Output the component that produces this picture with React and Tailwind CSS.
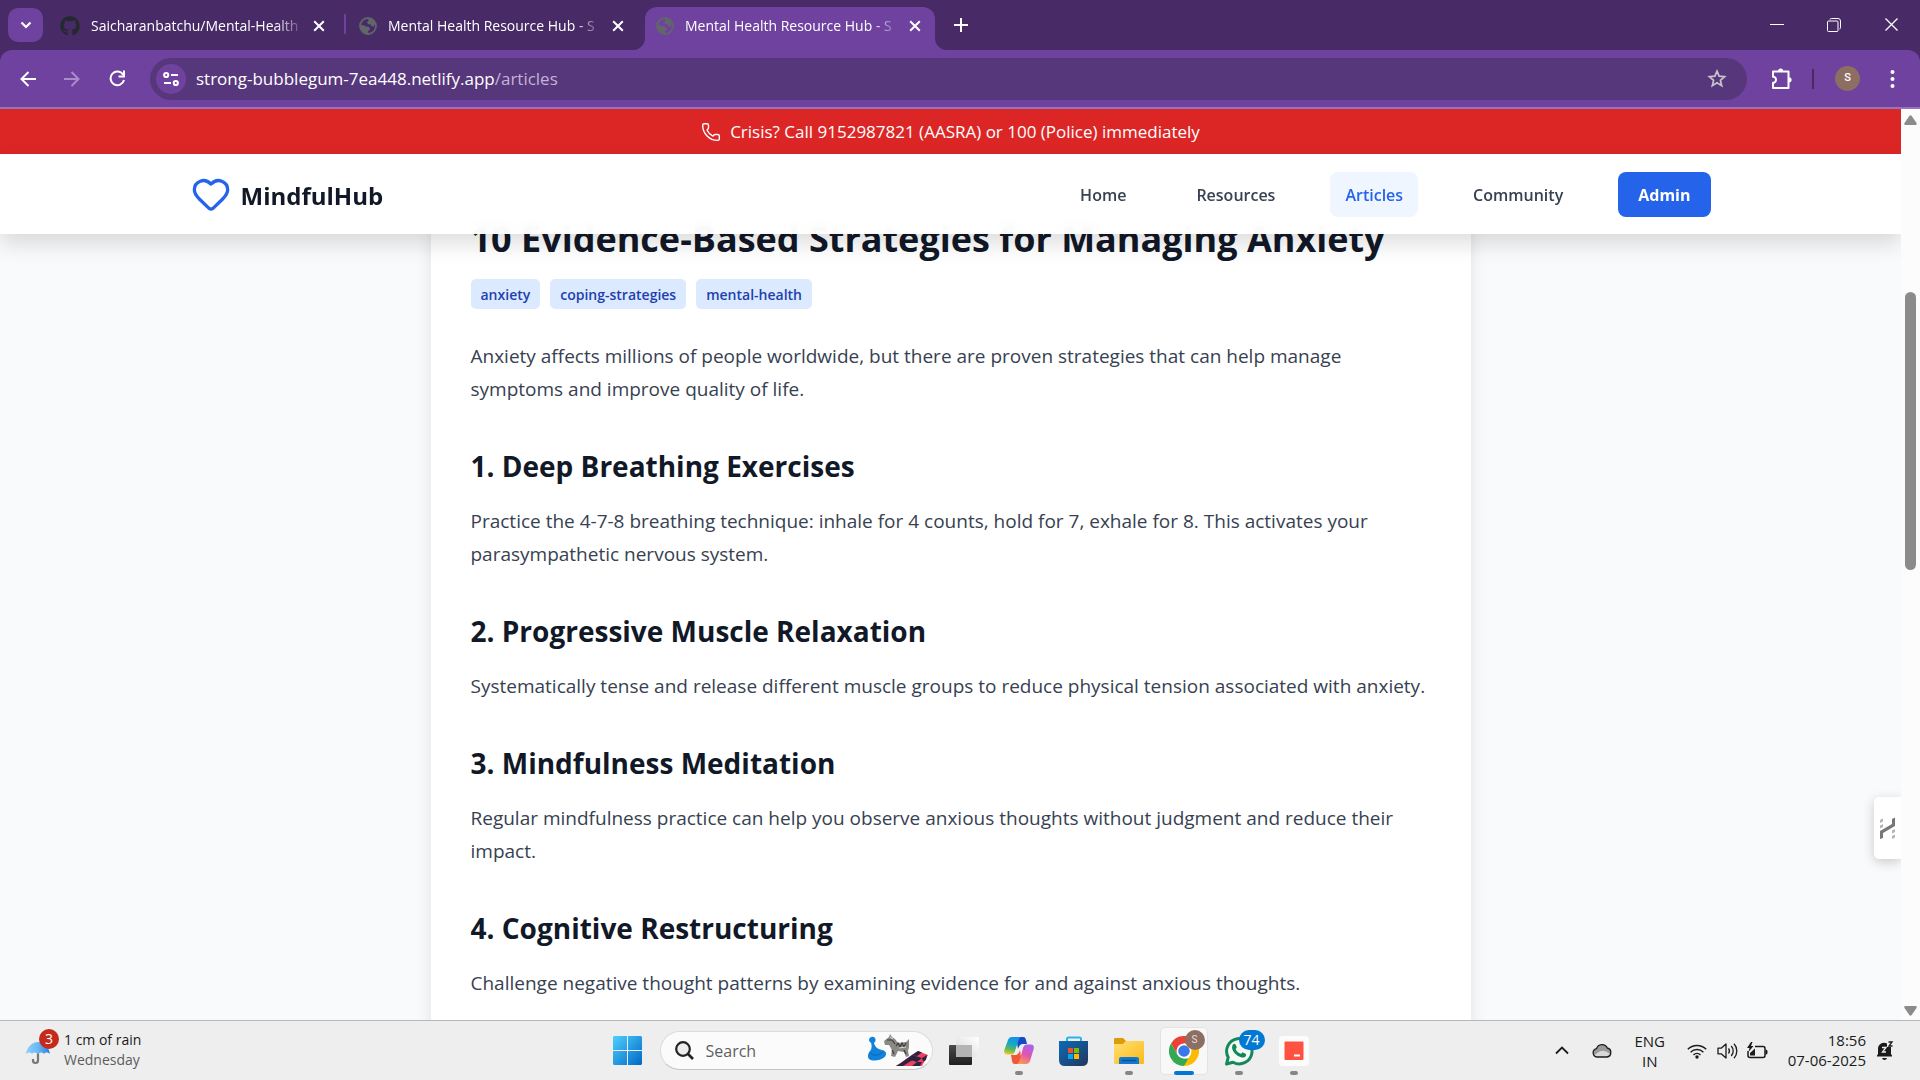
import React from 'react';
import { Phone, Heart } from 'lucide-react';
import { FaGithub } from 'react-icons/fa';

const sections = [
  {
    title: '1. Deep Breathing Exercises',
    text: 'Practice the 4-7-8 breathing technique: inhale for 4 counts, hold for 7, exhale for 8. This activates your parasympathetic nervous system.',
  },
  {
    title: '2. Progressive Muscle Relaxation',
    text: 'Systematically tense and release different muscle groups to reduce physical tension associated with anxiety.',
  },
  {
    title: '3. Mindfulness Meditation',
    text: 'Regular mindfulness practice can help you observe anxious thoughts without judgment and reduce their impact.',
  },
  {
    title: '4. Cognitive Restructuring',
    text: 'Challenge negative thought patterns by examining evidence for and against anxious thoughts.',
  },
];

function Cross({ size = 12, width = 2 }) {
  return (
    <svg width={size} height={size} viewBox="0 0 12 12" fill="none" stroke="currentColor" strokeWidth={width}>
      <path d="M1.2 1.2l9.6 9.6M10.8 1.2l-9.6 9.6" />
    </svg>
  );
}

function Globe() {
  return (
    <svg width="18" height="18" viewBox="0 0 18 18" className="shrink-0">
      <circle cx="9" cy="9" r="8" fill="none" stroke="#62666a" strokeWidth="1.8" />
      <path
        fill="#62666a"
        d="M9 1c3 0 6 2 7.300 4.500L15 9.500l-2.500-.3-1-2H9.200L8 5.500 9.500 3.500zM1.200 8L4.500 8.200 7 9.500l3 .5 1.200 2.500-2 1.500v2.500C5 17 1.500 13.500 1.200 8z"
      />
    </svg>
  );
}

function Tab({ icon, title, active }) {
  return (
    <div
      className={
        active
          ? 'relative flex h-[43px] w-[290px] items-center rounded-t-xl bg-[#6f42a0] pb-1.5 pl-[11px] pr-[14px]'
          : 'relative flex h-[43px] w-[299px] items-center pb-1.5 pl-[13px] pr-[21px]'
      }
    >
      {active && (
        <>
          <svg className="absolute -left-3 bottom-0" width="12" height="12" viewBox="0 0 12 12">
            <path d="M12 0v12H0A12 12 0 0 0 12 0z" fill="#6f42a0" />
          </svg>
          <svg className="absolute -right-3 bottom-0" width="12" height="12" viewBox="0 0 12 12">
            <path d="M0 0v12h12A12 12 0 0 1 0 0z" fill="#6f42a0" />
          </svg>
        </>
      )}
      {icon}
      <span className="ml-[11px] mr-2 min-w-0 flex-1 overflow-hidden whitespace-nowrap text-[14px] text-white [mask-image:linear-gradient(to_right,black_86%,transparent)]">
        {title}
      </span>
      <button aria-label="Close tab" className="text-white">
        <Cross />
      </button>
    </div>
  );
}

function TabStrip() {
  return (
    <div className="flex h-[50px] shrink-0 items-end bg-[#472a66]">
      <button aria-label="Search tabs" className="mb-2 ml-2 mr-1 flex h-[34px] w-[35px] items-center justify-center rounded-[10px] bg-[#6f42a0] text-white">
        <svg width="12" height="8" viewBox="0 0 12 8" fill="none" stroke="currentColor" strokeWidth="2.200">
          <path d="M1.500 1.500L6 6l4.500-4.500" />
        </svg>
      </button>
      <Tab icon={<FaGithub size={20} color="#24292e" className="shrink-0" />} title="Saicharanbatchu/Mental-Health" />
      <div className="mb-4 -ml-[2px] h-5 w-[2px] rounded bg-[#6f42a0]" />
      <Tab icon={<Globe />} title="Mental Health Resource Hub - S" />
      <Tab icon={<Globe />} title="Mental Health Resource Hub - S" active />
      <button aria-label="New tab" className="mb-[18px] ml-[19px] text-white">
        <svg width="14" height="14" viewBox="0 0 14 14" stroke="currentColor" strokeWidth="2">
          <path d="M7 0v14M0 7h14" />
        </svg>
      </button>
      <div className="mb-[18px] ml-auto mr-[21px] flex items-center gap-[43px] text-white">
        <button aria-label="Minimize">
          <svg width="14" height="14" viewBox="0 0 14 14" stroke="currentColor">
            <path d="M0 6.500h14" />
          </svg>
        </button>
        <button aria-label="Restore">
          <svg width="14" height="14" viewBox="0 0 14 14" fill="none" stroke="currentColor">
            <rect x=".5" y="3" width="10.500" height="10.500" rx="1" />
            <path d="M3 1.500Q3 .5 4.500 .5H11q2.500 0 2.500 2.500v6.500q0 1.500-1 1.500" />
          </svg>
        </button>
        <button aria-label="Close window">
          <Cross size={15} width={1} />
        </button>
      </div>
    </div>
  );
}

function Toolbar() {
  return (
    <div className="shrink-0 bg-[#472a66]">
      <div className="flex h-[59px] items-center rounded-t-xl border-b-2 border-[#9474bd] bg-[#6f42a0] pl-5 text-white">
        <button aria-label="Back">
          <svg width="16" height="16" viewBox="0 0 16 16" fill="none" stroke="currentColor" strokeWidth="2">
            <path d="M16 8H2M8.500 1L1.500 8l7 7" />
          </svg>
        </button>
        <button aria-label="Forward" className="ml-7 text-[#a98dc8]">
          <svg width="16" height="16" viewBox="0 0 16 16" fill="none" stroke="currentColor" strokeWidth="2">
            <path d="M0 8h14M7.500 1l7 7-7 7" />
          </svg>
        </button>
        <button aria-label="Reload" className="ml-[29px]">
          <svg width="17" height="17" viewBox="0 0 17 17" fill="none" stroke="currentColor" strokeWidth="2">
            <path d="M15 10a6.800 6.800 0 1 1-.8-5.200" />
            <path d="M15 .5v6H9.500" />
          </svg>
        </button>
        <div className="ml-6 flex h-[42px] min-w-0 flex-1 items-center rounded-full bg-[#57377b] pl-1.5 pr-5">
          <button aria-label="Site information" className="flex h-[30px] w-[30px] shrink-0 items-center justify-center rounded-full bg-[#6f42a0]">
            <svg width="16" height="16" viewBox="0 0 16 16" fill="none" stroke="currentColor" strokeWidth="2">
              <circle cx="3.200" cy="4" r="2.100" />
              <path d="M8 4h7M1 12h7" />
              <circle cx="12.800" cy="12" r="2.100" />
            </svg>
          </button>
          <a href="#address" className="ml-[10px] flex-1 whitespace-nowrap text-[17px]">
            strong-bubblegum-7ea448.netlify.app<span className="text-[#c3b3d6]">/articles</span>
          </a>
          <button aria-label="Bookmark this page" className="text-[#c8c4cc]">
            <svg width="20" height="19" viewBox="0 0 20 19" fill="none" stroke="currentColor" strokeWidth="1.700">
              <path d="M10 2.200l2.100 5 5.500.5-4.200 3.600 1.300 5.400L10 13.800l-4.700 2.900 1.300-5.400L2.400 7.700l5.500-.5z" />
            </svg>
          </button>
        </div>
        <button aria-label="Extensions" className="ml-6">
          <svg width="22" height="22" viewBox="0 0 22 22" fill="none" stroke="currentColor" strokeWidth="2">
            <path d="M2 3.500h15.500V20H2v-5.200c4 .2 4-6.200 0-6z" strokeLinejoin="round" />
            <path d="M7 3.200a2.600 2.600 0 0 1 5.200 0zM18 9.200a2.600 2.600 0 0 1 0 5.200z" fill="currentColor" stroke="none" />
          </svg>
        </button>
        <div className="ml-[19px] h-5 w-[2px] bg-[#472a66]" />
        <button aria-label="Profile" className="ml-[21px] flex h-[25px] w-[25px] items-center justify-center rounded-full bg-[#8d6e63] font-[Roboto] text-[11px] font-medium">
          S
        </button>
        <button aria-label="Browser menu" className="ml-[30px] mr-[25px]">
          <svg width="5" height="18" viewBox="0 0 5 18" fill="currentColor">
            <circle cx="2.500" cy="2" r="2" />
            <circle cx="2.500" cy="9" r="2" />
            <circle cx="2.500" cy="16" r="2" />
          </svg>
        </button>
      </div>
    </div>
  );
}

function NavLink({ children, active }) {
  return (
    <a
      href="#nav"
      className={
        active
          ? 'flex h-[45px] items-center rounded-lg bg-[#eff6ff] px-[15px] pt-[2px] text-[#2563eb]'
          : 'flex h-[45px] items-center rounded-lg px-[15px] pt-[2px] text-[#374151]'
      }
    >
      {children}
    </a>
  );
}

function Header() {
  return (
    <header className="relative z-10">
      <div className="flex h-[45px] items-center justify-center gap-[9px] bg-[#dc2626] pt-px text-[17px] text-white">
        <Phone size={20} strokeWidth={1.7} />
        <p>Crisis? Call 9152987821 (AASRA) or 100 (Police) immediately</p>
      </div>
      <div className="h-20 bg-white/95 shadow-[0_10px_20px_rgba(0,0,0,0.13)] backdrop-blur-sm">
        <div className="mx-auto flex h-full max-w-[1600px] items-center justify-between px-10">
          <a href="#home" className="flex items-center gap-[10px]">
            <Heart size={40} color="#2563eb" strokeWidth={2} />
            <span className="pt-[3px] text-[24px] font-bold text-[#111827]">MindfulHub</span>
          </a>
          <nav className="flex items-center gap-10 text-[16px] font-semibold">
            <NavLink>Home</NavLink>
            <NavLink>Resources</NavLink>
            <NavLink active>Articles</NavLink>
            <NavLink>Community</NavLink>
            <button className="h-[45px] rounded-lg bg-[#2563eb] px-5 pt-[2px] font-bold text-white">Admin</button>
          </nav>
        </div>
      </div>
    </header>
  );
}

function Article() {
  return (
    <article className="mx-auto -mt-20 max-w-[1040px] bg-white px-10 pb-10 pt-[61px] shadow-[0_4px_16px_rgba(0,0,0,0.1)]">
      <h1 className="whitespace-nowrap text-[36px] font-bold leading-[48px] text-[#111827]">
        10 Evidence-Based Strategies for Managing Anxiety
      </h1>
      <div className="mb-[31px] mt-4 flex gap-[10px]">
        {['anxiety', 'coping-strategies', 'mental-health'].map((tag) => (
          <span key={tag} className="flex h-[30px] items-center rounded-[5px] bg-[#dbeafe] px-[10px] text-[14px] font-semibold text-[#1e40af]">
            {tag}
          </span>
        ))}
      </div>
      <p className="text-[19px] leading-[33px] text-[#374151]">
        Anxiety affects millions of people worldwide, but there are proven strategies that can help manage symptoms and improve quality of life.
      </p>
      {sections.map((s) => (
        <section key={s.title}>
          <h2 className="mb-[19px] mt-10 text-[28px] font-bold leading-[40px] text-[#111827]">{s.title}</h2>
          <p className="text-[19px] leading-[33px] text-[#374151]">{s.text}</p>
        </section>
      ))}
    </article>
  );
}

function Scrollbar() {
  return (
    <div className="flex w-[19px] shrink-0 flex-col items-center bg-[#fcfcfc] pb-1 pt-[6px]">
      <svg width="13" height="10" viewBox="0 0 13 10" fill="#8b8b8b">
        <path d="M5.300 1a1.500 1.500 0 0 1 2.400 0L12.500 8q.8 2-1 2h-10q-1.800 0-1-2z" />
      </svg>
      <div className="grow-[38]" />
      <div className="w-[11px] grow-[63] rounded-full bg-[#8b8b8b]" />
      <div className="grow-[99]" />
      <svg width="13" height="10" viewBox="0 0 13 10" fill="#8b8b8b">
        <path d="M5.300 9a1.500 1.500 0 0 0 2.400 0L12.500 2q.8-2-1-2h-10q-1.800 0-1 2z" />
      </svg>
    </div>
  );
}

function Weather() {
  return (
    <button className="flex items-center pl-[26px] text-left">
      <span className="relative">
        <svg width="26" height="30" viewBox="0 0 26 30">
          <defs>
            <linearGradient id="umb" x1="0" y1="0" x2="1" y2="0">
              <stop offset="0" stopColor="#8fd0f8" />
              <stop offset=".5" stopColor="#6ab8f7" />
              <stop offset="1" stopColor="#2b7fe0" />
            </linearGradient>
          </defs>
          <path d="M12 13v11.500a2.500 2.500 0 0 1-5 0V23" fill="none" stroke="#777" strokeWidth="2.200" />
          <path d="M0 18C1 10 7 6 12 6s11 4 12 12c-2-2-5-2-6 0-1.500-2-4-2-6 0-2-2-4.500-2-6 0-1.500-2-4-2-6 0z" fill="url(#umb)" />
        </svg>
        <span className="absolute -top-[7px] left-[13px] flex h-5 w-5 items-center justify-center rounded-full bg-[#c42b1c] text-[14px] text-white">3</span>
      </span>
      <span className="ml-3 pb-[2px] text-[14px] leading-5">
        <span className="block text-[#1b1b1b]">1 cm of rain</span>
        <span className="block text-[#5c5c5c]">Wednesday</span>
      </span>
    </button>
  );
}

function TaskbarButton({ label, children, running, active }) {
  return (
    <button
      aria-label={label}
      className={
        active
          ? 'relative flex h-12 w-12 items-center justify-center rounded-[5px] border border-[#e3e3e3] bg-[#f8f8f8]'
          : 'relative flex h-12 w-12 items-center justify-center'
      }
    >
      {children}
      {running && !active && <span className="absolute bottom-0 left-5 h-1 w-2 rounded-full bg-[#868686]" />}
      {active && <span className="absolute -bottom-px left-[13px] h-1 w-5 rounded-full bg-[#0078d4]" />}
    </button>
  );
}

function TaskbarApps() {
  return (
    <div className="flex items-center pl-[10px]">
      <button aria-label="Start" className="mr-[18px]">
        <svg width="29" height="29" viewBox="0 0 29 29">
          <defs>
            <linearGradient id="win" x1="0" y1="0" x2="1" y2="1">
              <stop offset="0" stopColor="#4fd0fc" />
              <stop offset="1" stopColor="#0067c8" />
            </linearGradient>
          </defs>
          <path d="M1 0h13v14H0V1zM15 0h13l1 1v13H15zM0 15h14v14H1l-1-1zM15 15h14v13l-1 1H15z" fill="url(#win)" />
        </svg>
      </button>
      <label className="mr-[7px] flex h-[39px] w-[273px] items-center rounded-full border border-[#dcdcdc] border-b-[#c4c4c4] bg-[#fbfbfb] pl-[14px] pr-1">
        <svg width="19" height="19" viewBox="0 0 19 19" fill="none" stroke="#222" strokeWidth="2.200">
          <circle cx="8" cy="8" r="6.800" fill="#ededed" />
          <path d="M13 13l5 5" strokeWidth="2.600" />
        </svg>
        <input aria-label="Search" placeholder="Search" className="ml-3 w-0 min-w-0 flex-1 bg-transparent text-[16px] placeholder-[#5f5f5f] outline-none" />
        <svg width="60" height="34" viewBox="0 0 60 34">
          <path d="M1 6a3.300 3.300 0 1 1 5 2.800C7 13 9 15 14 16c5 1 5 5 2 7.500-4 3.500-12 4-15 1.500-2-2-1-6 1.500-8.500C4 14 3.800 11 3 8.800 1.800 8.300 1 7 1 6z" fill="#1182dc" />
          <path d="M2 19c3 3 9 3 13-1" fill="none" stroke="#0a63b4" />
          <path d="M16 7l5-4 1-3 2 3 3 2 3 4 8-1 3-3 0 8-1 4 1 5-3 1-2-5-6-1-3 6-4-1 1-6-3-5-4 0z" fill="#8a8983" />
          <path d="M19 6l5 0 3 4M28 12l2-3 2 4 2-4 2 4 2-4M24 16l2 4M36 16l2 4" fill="none" stroke="#3f3e3a" strokeWidth="1.200" />
          <path d="M22 3l3 2M31 14l7-1" stroke="#dcdbd5" />
          <path d="M28 32L50 17l10 4-6 11z" fill="#f0415d" />
          <path d="M50 17l4 1.500-5 3.500-5-1zM39 24.500l5-3.500 5 1.500-5 4zM54 24l5-3-1 5-3 1.500zM33 29l6-4.500 5 2-6 3.500zM44 26.500l5-4 5 1.500-5 4zM28 32l5-3 5 1-3 2zM44 32l5-4 5 0-2 4z" fill="#2a2440" />
        </svg>
      </label>
      <div className="flex gap-[7px]">
        <TaskbarButton label="Task view">
          <svg width="30" height="30" viewBox="0 0 30 30">
            <defs>
              <linearGradient id="tvb" x1="0" y1="0" x2="0" y2="1">
                <stop offset="0" stopColor="#4a4a4a" />
                <stop offset="1" stopColor="#1f1f1f" />
              </linearGradient>
              <linearGradient id="tvw" x1="1" y1="0" x2="0" y2="1">
                <stop offset="0" stopColor="#fff" />
                <stop offset="1" stopColor="#d8d8d8" />
              </linearGradient>
            </defs>
            <rect x="0" y="9" width="23" height="20" rx="1" fill="url(#tvb)" />
            <rect x="7" y="1" width="23" height="20" rx="1" fill="url(#tvw)" />
            <rect x="7" y="9" width="16" height="12" fill="#b4b4b4" />
          </svg>
        </TaskbarButton>
        <TaskbarButton label="Copilot" running>
          <svg width="30" height="30" viewBox="0 0 30 30">
            <defs>
              <linearGradient id="cp1" x1=".5" y1="0" x2=".3" y2="1">
                <stop offset="0" stopColor="#1590e8" />
                <stop offset=".4" stopColor="#16a9c4" />
                <stop offset=".7" stopColor="#58b95b" />
                <stop offset="1" stopColor="#f2c81e" />
              </linearGradient>
              <linearGradient id="cp2" x1=".7" y1="0" x2=".3" y2="1">
                <stop offset="0" stopColor="#a665ee" />
                <stop offset=".5" stopColor="#e055b0" />
                <stop offset="1" stopColor="#f99a50" />
              </linearGradient>
            </defs>
            <path d="M12 1h7c2 0 2.500 1 3 3l1 4h-4c-3 0-4 2-5 5z" fill="#1848c8" />
            <path d="M8 1h9c-2 1-2.500 3-3 5l-3 9c-1 3-2 3.500-4 3.500H3c-2.500 0-3.500-2-2.500-5L4 4c.6-2 2-3 4-3z" fill="url(#cp1)" />
            <path d="M18 28h-7c-2 0-2.500-1-3-3l-1-6h4c3 0 4-2 5-5z" fill="#f0583c" />
            <path d="M22 28h-9c2-1 2.500-3 3-5l3-11c1-3 2-3.500 4-3.500h4c2.500 0 3.500 2 2.500 5L26 25c-.6 2-2 3-4 3z" fill="url(#cp2)" />
          </svg>
        </TaskbarButton>
        <TaskbarButton label="Microsoft Store">
          <svg width="30" height="30" viewBox="0 0 30 30">
            <defs>
              <linearGradient id="st" x1="0" y1="0" x2="1" y2="1">
                <stop offset="0" stopColor="#0c6cb8" />
                <stop offset="1" stopColor="#24355e" />
              </linearGradient>
            </defs>
            <path d="M8 6V3q0-1.500 1.500-1.500h11Q22 1.500 22 3v3" fill="none" stroke="#27b5ee" strokeWidth="2" />
            <path d="M0 5h29v19q0 6-6 6H6q-6 0-6-6z" fill="url(#st)" />
            <path fill="#f25022" d="M9 12h5v5H9z" />
            <path fill="#7fba00" d="M15 12h5v5h-5z" />
            <path fill="#00a4ef" d="M9 18h5v5H9z" />
            <path fill="#ffb900" d="M15 18h5v5h-5z" />
          </svg>
        </TaskbarButton>
        <TaskbarButton label="File Explorer" running>
          <svg width="30" height="30" viewBox="0 0 30 30">
            <defs>
              <linearGradient id="fe" x1="0" y1="0" x2="1" y2="1">
                <stop offset="0" stopColor="#ffdf72" />
                <stop offset="1" stopColor="#fcba18" />
              </linearGradient>
            </defs>
            <path d="M0 3q0-1 1-1h8l4 4h-2L9 9H0z" fill="#dc9c0a" />
            <path d="M0 8h9l3-3h17q1 0 1 1v21q0 1-1 1H1q-1 0-1-1z" fill="url(#fe)" />
            <path d="M5 28v-5q0-2 2-2h16q2 0 2 2v5z" fill="#1478cc" />
            <path d="M8 24.500h14" stroke="#0b5394" strokeWidth="1.500" />
          </svg>
        </TaskbarButton>
        <TaskbarButton label="Google Chrome" active>
          <svg width="30" height="30" viewBox="0 0 48 48">
            <path d="M3.200 12A24 24 0 0 1 44.800 12H24L13.600 30z" fill="#ea4335" />
            <path d="M3.200 12L13.600 30 24 36H34.400L24 48A24 24 0 0 1 3.200 12z" fill="#34a853" />
            <path d="M24 48L34.400 30V12h10.400A24 24 0 0 1 24 48zM24 12h12v18z" fill="#fbbc04" />
            <circle cx="24" cy="24" r="12" fill="#fff" />
            <circle cx="24" cy="24" r="9.300" fill="#3b78e7" />
          </svg>
          <span className="absolute right-[2px] top-[2px] flex h-5 w-5 items-center justify-center rounded-full bg-[#8d6e63] font-[Roboto] text-[10px] text-[#e6dcd8]">S</span>
        </TaskbarButton>
        <TaskbarButton label="WhatsApp" running>
          <svg width="30" height="30" viewBox="0 0 30 30">
            <path d="M2.500 28l1.700-6.700A12.700 12.700 0 1 1 9 26.200z" fill="#f4fbf7" stroke="#15885a" strokeWidth="3" strokeLinejoin="round" />
            <path d="M9 8.500c1-1.200 2.200-1 2.700.2l1 2.300c.4.800-1 1.700-1 2.300 1.200 2.500 3 3.800 5 4.500.8.200 1.400-1.700 2.200-1.400l2.700 1.300c1 .6.600 2.500-.6 3.300-2.500 1.500-6.500 0-9.500-3-3-2.800-4.500-7-2.500-9.500z" fill="#15885a" />
          </svg>
          <span className="absolute -right-[2px] top-[3px] flex h-5 w-[26px] items-center justify-center rounded-full bg-[#0078d4] text-[14px] text-white">74</span>
        </TaskbarButton>
        <TaskbarButton label="Screen recorder" running>
          <svg width="30" height="30" viewBox="0 0 30 30">
            <rect width="30" height="30" rx="4" fill="#fcfcfc" />
            <rect x="5.500" y="5.500" width="19" height="18.500" rx="1" fill="#ff5240" />
            <path d="M15 19.500h6" stroke="#fff" strokeWidth="2" />
          </svg>
        </TaskbarButton>
      </div>
    </div>
  );
}

function Tray() {
  return (
    <div className="flex items-center justify-end pr-[26px] text-[15px] leading-5 text-[#1b1b1b]">
      <button aria-label="Show hidden icons">
        <svg width="14" height="9" viewBox="0 0 14 9" fill="none" stroke="#1b1b1b" strokeWidth="1.800">
          <path d="M1 7.500l6-6 6 6" />
        </svg>
      </button>
      <svg className="ml-[23px]" width="20" height="15" viewBox="0 0 20 15">
        <path d="M5 14a4.200 4.200 0 0 1-.5-8.300A5.800 5.800 0 0 1 15.300 5 4.600 4.600 0 0 1 15 14z" fill="#9a9a9a" />
        <path d="M2 12c3-1 6-5 10-4 3 .5 5 2 6.500 4-1 1.500-2 2-3.500 2H5q-2 0-3-2z" fill="#d9d9d9" />
        <path d="M5 14a4.200 4.200 0 0 1-.5-8.300A5.800 5.800 0 0 1 15.300 5 4.600 4.600 0 0 1 15 14z" fill="none" stroke="#1b1b1b" strokeWidth="1.300" />
      </svg>
      <button className="ml-[22px] w-8 text-center">
        ENG
        <br />
        IN
      </button>
      <svg className="ml-[21px]" width="20" height="16" viewBox="0 0 20 16" fill="none" stroke="#1b1b1b" strokeWidth="1.400">
        <path d="M.8 6.300a13 13 0 0 1 18.400 0M3.600 9.200a9 9 0 0 1 12.800 0M6.500 12a5 5 0 0 1 7 0" />
        <circle cx="10" cy="14" r="1.700" fill="#1b1b1b" stroke="none" />
      </svg>
      <svg className="ml-[10px]" width="21" height="18" viewBox="0 0 21 18" fill="none" stroke="#1b1b1b" strokeWidth="1.300">
        <path d="M1 6.200h3.200L9 2v14l-4.800-4.200H1z" strokeLinejoin="round" />
        <path d="M11.500 6.500a4 4 0 0 1 0 5M14.200 4a7.300 7.300 0 0 1 0 10M17 1.800a10.600 10.600 0 0 1 0 14.400" />
      </svg>
      <svg className="ml-[9px]" width="21" height="18" viewBox="0 0 21 18">
        <path d="M8 4.500h8q2 0 2 2v7q0 2-2 2H3q-2 0-2-2V9" fill="none" stroke="#1b1b1b" strokeWidth="1.500" />
        <path d="M3 13.500V11l5-4.500v7z" fill="#1b1b1b" />
        <path d="M18.500 7.500q2 0 2 1.500v2q0 1.500-2 1.500z" fill="#1b1b1b" />
        <path d="M4 0L0 6h2.500L1.500 10 6.500 4H4L5.500 0z" fill="#1b1b1b" />
      </svg>
      <button className="ml-[20px] pb-[2px] text-right">
        18:56
        <br />
        07-06-2025
      </button>
      <svg className="ml-[10px]" width="18" height="20" viewBox="0 0 18 20">
        <path d="M2 13V7.500a6 6 0 0 1 9-5V6h4v7l1 1.500v1H1v-1z" fill="#1b1b1b" />
        <path d="M6 17h5q-.5 2-2.500 2T6 17z" fill="#1b1b1b" />
        <path d="M6 6.500h4L6.500 11H10" fill="none" stroke="#eee" strokeWidth="1.300" />
        <path d="M12.500 1H16l-3 4h3.500" fill="none" stroke="#1b1b1b" strokeWidth="1.300" />
      </svg>
    </div>
  );
}

export default function App() {
  return (
    <div className="flex h-screen flex-col overflow-hidden font-['Segoe_UI','Open_Sans',sans-serif]">
      <TabStrip />
      <Toolbar />
      <div className="flex min-h-0 flex-1">
        <main className="relative min-w-0 flex-1 overflow-hidden bg-[#f9fafb]">
          <Header />
          <Article />
          <button
            aria-label="Open side panel"
            className="absolute right-0 top-[688px] flex h-[62px] w-[27px] items-center rounded-l-[5px] bg-white pl-1.5 shadow-[0_3px_12px_rgba(0,0,0,0.2)]"
          >
            <svg width="16" height="23" viewBox="0 0 16 23">
              <path d="M0 22v-8l12-7V2l3-1.500v8.500L3 16v5z" fill="#777" />
              <path d="M0 3l3-1.500v3L0 6zM0 8.500L3 7v3l-3 1.500zM12 13.500l3-1.500v3l-3 1.500zM12 19l3-1.500v3L12 22z" fill="#b5b5b5" />
            </svg>
          </button>
        </main>
        <Scrollbar />
      </div>
      <footer className="grid h-[60px] shrink-0 grid-cols-[1fr_auto_1fr] border-t border-[#b9b9b9] bg-[#eeeeee]">
        <Weather />
        <TaskbarApps />
        <Tray />
      </footer>
    </div>
  );
}
